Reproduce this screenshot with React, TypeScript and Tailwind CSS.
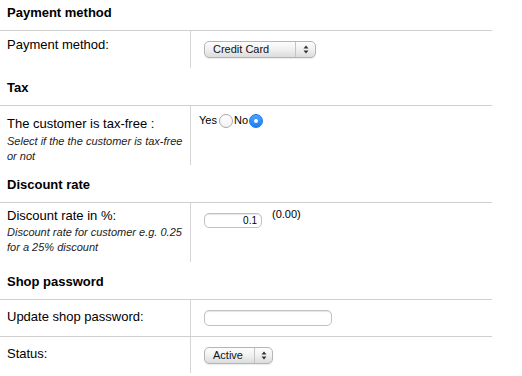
import React from "react";

const FONT = "font-['Liberation_Sans',Arial,Helvetica,sans-serif]";

function Heading({ children, first }: { children: React.ReactNode; first?: boolean }) {
	return (
		<div
			className={`${first ? "pt-[5px]" : "pt-[12px]"} pb-[10px] pl-[7px] text-[13px] leading-[15px] font-bold`}
		>
			{children}
		</div>
	);
}

function Arrows() {
	return (
		<svg width="6" height="9" viewBox="0 0 6 9">
			<path d="M3 0.5 L5.5 3.5 L0.5 3.5 Z" fill="#333" />
			<path d="M3 8.5 L5.5 5.5 L0.5 5.5 Z" fill="#333" />
		</svg>
	);
}

function Select({ label, width, arrowW }: { label: string; width: string; arrowW: string }) {
	return (
		<div
			className={`${width} h-[17px] flex items-stretch rounded-[5px] border border-[#b5b5b5] bg-gradient-to-b from-[#fdfdfd] via-[#f0f0f0] to-[#dcdcdc] shadow-[0_1px_1px_rgba(0,0,0,0.08)] text-[11px] leading-[15px] text-[#111]`}
		>
			<div className="flex-1 pl-[8px] flex items-center">{label}</div>
			<div className={`${arrowW} border-l border-[#c4c4c4] flex items-center justify-center`}>
				<Arrows />
			</div>
		</div>
	);
}

function Radio({ checked }: { checked?: boolean }) {
	if (checked) {
		return (
			<span className="block w-[14px] h-[14px] rounded-full bg-gradient-to-b from-[#4aa3ff] to-[#1a7ff5] border border-[#1b78e8] flex items-center justify-center">
				<span className="block w-[4px] h-[4px] rounded-full bg-white" />
			</span>
		);
	}
	return (
		<span className="block w-[14px] h-[14px] rounded-full bg-gradient-to-b from-white to-[#f3f3f3] border border-[#a8a8a8]" />
	);
}

function Row({
	label,
	desc,
	labelPad,
	height,
	children,
	rightPad,
}: {
	label: string;
	desc?: React.ReactNode;
	labelPad: string;
	height: string;
	children: React.ReactNode;
	rightPad: string;
}) {
	return (
		<div className={`flex border-t border-[#cfcfcf] ${height}`}>
			<div className={`w-[191px] shrink-0 border-r border-[#d6d6d6] pl-[7px] ${labelPad}`}>
				<div className="text-[13px] leading-[15px]">{label}</div>
				{desc}
			</div>
			<div className={`flex-1 ${rightPad}`}>{children}</div>
		</div>
	);
}

export default function App() {
	return (
		<div className={`w-[492px] bg-white text-black ${FONT}`}>
			<Heading first>Payment method</Heading>
			<Row label="Payment method:" labelPad="pt-[6px]" height="h-[38px]" rightPad="pl-[13px] pt-[10px]">
				<Select label="Credit Card" width="w-[112px]" arrowW="w-[20px]" />
			</Row>

			<Heading>Tax</Heading>
			<Row
				label="The customer is tax-free :"
				labelPad="pt-[10px]"
				height="h-[60px]"
				rightPad="pl-[8px] pt-[7px]"
				desc={
					<div className="mt-[3px] text-[11px] leading-[15px] italic text-[#222]">
						Select if the the customer is tax-free
						<br />
						or not
					</div>
				}
			>
				<div className="flex items-center text-[11px] leading-[15px]">
					<span>Yes</span>
					<span className="ml-[2px]">
						<Radio />
					</span>
					<span className="ml-[1px]">No</span>
					<span className="ml-[1px]">
						<Radio checked />
					</span>
				</div>
			</Row>

			<Heading>Discount rate</Heading>
			<Row
				label="Discount rate in %:"
				labelPad="pt-[5px]"
				height="h-[60px]"
				rightPad="pl-[13px]"
				desc={
					<div className="mt-[2px] text-[11px] leading-[15px] italic text-[#222]">
						Discount rate for customer e.g. 0.25
						<br />
						for a 25% discount
					</div>
				}
			>
				<div className="flex items-start">
					<input
						readOnly
						value="0.1"
						className="mt-[10px] w-[58px] h-[15px] rounded-[5px] border border-[#c2c2c2] shadow-[inset_0_1px_1px_rgba(0,0,0,0.1)] text-right pr-[4px] text-[10px] leading-[13px] outline-none"
					/>
					<span className="ml-[10px] pt-[4px] text-[11px] leading-[15px]">(0.00)</span>
				</div>
			</Row>

			<Heading>Shop password</Heading>
			<Row label="Update shop password:" labelPad="pt-[9px]" height="h-[37px]" rightPad="pl-[13px] pt-[10px]">
				<input
					readOnly
					type="password"
					className="block w-[128px] h-[16px] rounded-[5px] border border-[#c2c2c2] shadow-[inset_0_1px_1px_rgba(0,0,0,0.1)] outline-none"
				/>
			</Row>
			<Row label="Status:" labelPad="pt-[9px]" height="h-[37px]" rightPad="pl-[13px] pt-[10px]">
				<Select label="Active" width="w-[69px]" arrowW="w-[18px]" />
			</Row>
		</div>
	);
}
